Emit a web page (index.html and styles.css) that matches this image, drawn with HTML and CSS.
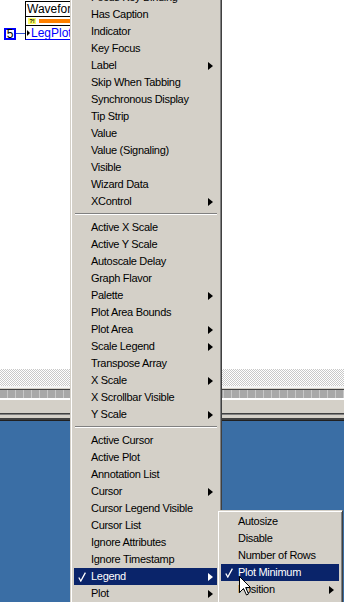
FILE: index.html
```html
<!DOCTYPE html>
<html lang="en">

<head>
    <meta charset="UTF-8">
    <meta name="viewport" content="width=device-width, initial-scale=1.0">
    <link rel="stylesheet" href="styles.css">
    <title>Property Node - Legend</title>
</head>

<body>
    <div class="screen">
        <div class="diagram">
            <div class="node prop-node">
                <div class="prop-title">Waveform Graph</div>
                <div class="prop-error"><span class="warn">?!</span><span class="bar"></span></div>
                <div class="prop-row"><span class="tri"></span>LegPlotMin</div>
            </div>
            <div class="node const">5</div>
            <div class="node wire"></div>
        </div>
        <div class="checker"></div>
        <div class="frame-top"></div>
        <div class="ruler"></div>
        <div class="panel"></div>
        <div class="rail"></div>
        <div class="desktop"></div>
    </div>

    <ul class="menu main-menu">
        <li class="item"><span class="mark"></span><span class="label">Focus Key Binding</span></li>
        <li class="item"><span class="mark"></span><span class="label">Has Caption</span></li>
        <li class="item"><span class="mark"></span><span class="label">Indicator</span></li>
        <li class="item"><span class="mark"></span><span class="label">Key Focus</span></li>
        <li class="item sub"><span class="mark"></span><span class="label">Label</span></li>
        <li class="item"><span class="mark"></span><span class="label">Skip When Tabbing</span></li>
        <li class="item"><span class="mark"></span><span class="label">Synchronous Display</span></li>
        <li class="item"><span class="mark"></span><span class="label">Tip Strip</span></li>
        <li class="item"><span class="mark"></span><span class="label">Value</span></li>
        <li class="item"><span class="mark"></span><span class="label">Value (Signaling)</span></li>
        <li class="item"><span class="mark"></span><span class="label">Visible</span></li>
        <li class="item"><span class="mark"></span><span class="label">Wizard Data</span></li>
        <li class="item sub"><span class="mark"></span><span class="label">XControl</span></li>
        <li class="sep"></li>
        <li class="item"><span class="mark"></span><span class="label">Active X Scale</span></li>
        <li class="item"><span class="mark"></span><span class="label">Active Y Scale</span></li>
        <li class="item"><span class="mark"></span><span class="label">Autoscale Delay</span></li>
        <li class="item"><span class="mark"></span><span class="label">Graph Flavor</span></li>
        <li class="item sub"><span class="mark"></span><span class="label">Palette</span></li>
        <li class="item"><span class="mark"></span><span class="label">Plot Area Bounds</span></li>
        <li class="item sub"><span class="mark"></span><span class="label">Plot Area</span></li>
        <li class="item sub"><span class="mark"></span><span class="label">Scale Legend</span></li>
        <li class="item"><span class="mark"></span><span class="label">Transpose Array</span></li>
        <li class="item sub"><span class="mark"></span><span class="label">X Scale</span></li>
        <li class="item"><span class="mark"></span><span class="label">X Scrollbar Visible</span></li>
        <li class="item sub"><span class="mark"></span><span class="label">Y Scale</span></li>
        <li class="sep"></li>
        <li class="item"><span class="mark"></span><span class="label">Active Cursor</span></li>
        <li class="item"><span class="mark"></span><span class="label">Active Plot</span></li>
        <li class="item"><span class="mark"></span><span class="label">Annotation List</span></li>
        <li class="item sub"><span class="mark"></span><span class="label">Cursor</span></li>
        <li class="item"><span class="mark"></span><span class="label">Cursor Legend Visible</span></li>
        <li class="item"><span class="mark"></span><span class="label">Cursor List</span></li>
        <li class="item"><span class="mark"></span><span class="label">Ignore Attributes</span></li>
        <li class="item"><span class="mark"></span><span class="label">Ignore Timestamp</span></li>
        <li class="item sub active">
            <span class="mark"><svg width="8" height="10" viewBox="0 0 8 10"><polyline points="0.8,5.5 2.8,9 7.4,0.6" fill="none" stroke="currentColor" stroke-width="1.3"/></svg></span>
            <span class="label">Legend</span>
        </li>
        <li class="item sub"><span class="mark"></span><span class="label">Plot</span></li>
    </ul>

    <ul class="menu sub-menu">
        <li class="item"><span class="mark"></span><span class="label">Autosize</span></li>
        <li class="item"><span class="mark"></span><span class="label">Disable</span></li>
        <li class="item"><span class="mark"></span><span class="label">Number of Rows</span></li>
        <li class="item active">
            <span class="mark"><svg width="8" height="10" viewBox="0 0 8 10"><polyline points="0.8,5.5 2.8,9 7.4,0.6" fill="none" stroke="currentColor" stroke-width="1.3"/></svg></span>
            <span class="label">Plot Minimum</span>
        </li>
        <li class="item sub"><span class="mark"></span><span class="label">Position</span></li>
        <li class="item"><span class="mark"></span><span class="label">Scrollbar Visible</span></li>
    </ul>

    <svg class="pointer" width="13" height="20" viewBox="0 0 13 20">
        <path d="M0.5 0.5 L0.5 16.5 L4.5 12.5 L7.5 19 L9.5 18 L6.7 11.5 L11.5 11.5 Z" fill="#fff" stroke="#000" stroke-width="1"/>
    </svg>
</body>

</html>
```

FILE: styles.css
```css
* {
    margin: 0;
    padding: 0;
    box-sizing: border-box;
}

body {
    width: 344px;
    height: 602px;
    overflow: hidden;
    position: relative;
    background: #fff;
    font-family: "Liberation Sans", Arial, sans-serif;
    font-size: 11px;
}

.screen {
    display: flex;
    flex-direction: column;
    height: 602px;
}

/*--------block diagram-------*/

.diagram {
    position: relative;
    flex: none;
    height: 369px;
    background: #fff;
}

.node {
    position: absolute;
}

.prop-node {
    left: 25px;
    top: 1px;
    width: 80px;
    border: 1px solid #000;
    border-bottom-color: #0000ff;
    background: #fff;
}

.prop-title {
    height: 15px;
    line-height: 14px;
    font-size: 12px;
    padding-left: 1px;
    white-space: nowrap;
    border-bottom: 1px solid #000;
}

.prop-error {
    display: flex;
    align-items: center;
    gap: 3px;
    height: 9px;
    padding-left: 2px;
    border-bottom: 1px solid #000;
}

.warn {
    width: 8px;
    height: 6px;
    background: #ffff66;
    font-size: 6px;
    line-height: 6px;
    font-weight: 700;
    text-align: center;
    overflow: hidden;
}

.bar {
    flex: 1;
    height: 4px;
    background: #ff8000;
}

.prop-row {
    display: flex;
    align-items: center;
    height: 13px;
    padding-left: 1px;
    font-size: 12px;
    color: #0000ff;
    white-space: nowrap;
}

.tri {
    width: 0;
    height: 0;
    margin-right: 1px;
    border-left: 3px solid #000;
    border-top: 3px solid transparent;
    border-bottom: 3px solid transparent;
}

.const {
    left: 4px;
    top: 28px;
    width: 12px;
    height: 12px;
    border: 2px solid #0000ff;
    background: #fff;
    font-size: 12px;
    line-height: 8px;
    text-align: center;
}

.wire {
    left: 16px;
    top: 33px;
    width: 9px;
    height: 1px;
    background: #3050d0;
}

/*--------window strips-------*/

.checker {
    flex: none;
    height: 17px;
    background: repeating-conic-gradient(#c8c8c8 0 25%, #fff 0 50%) 0 0 / 2px 2px;
}

.frame-top {
    flex: none;
    height: 3px;
    border-top: 2px solid #f4f4f4;
    border-bottom: 1px solid #d4d0c8;
}

.ruler {
    flex: none;
    height: 9px;
    border-top: 1px solid #404040;
    background: repeating-linear-gradient(90deg, #a8a8a8 0 7px, #c8c8c8 7px 8px);
}

.panel {
    flex: none;
    height: 15px;
    border-top: 2px solid #fff;
    background: #d4d0c8;
}

.rail {
    flex: none;
    height: 8px;
    background: linear-gradient(#404040 0 1px, #808080 1px 2px, #d4d0c8 2px 5px, #404040 5px 7px, #202020 7px 8px);
}

.desktop {
    flex: 1;
    background: #3a6ea5;
}

/*--------menus-------*/

.menu {
    position: absolute;
    list-style: none;
    background: #d4d0c8;
    padding: 2px 3px;
    border: 1px solid;
    border-color: #d4d0c8 #404040 #404040 #d4d0c8;
    box-shadow: inset 1px 1px #fff, inset -1px -1px #808080;
    color: #000;
}

.main-menu {
    left: 70px;
    top: -14px;
    width: 152px;
}

.sub-menu {
    left: 217px;
    top: 510px;
    width: 126px;
}

.item {
    display: flex;
    align-items: center;
    height: 17px;
    padding-right: 5px;
    white-space: nowrap;
}

.mark {
    flex: none;
    display: flex;
    align-items: center;
    width: 17px;
    height: 17px;
    padding-left: 4px;
}

.label {
    flex: 1;
    line-height: 17px;
    letter-spacing: -0.3px;
}

.item.sub::after {
    content: "";
    width: 0;
    height: 0;
    border-left: 5px solid currentColor;
    border-top: 4px solid transparent;
    border-bottom: 4px solid transparent;
}

.item.active {
    background: #0a246a;
    color: #fff;
}

.sep {
    height: 0;
    margin: 3px 1px 4px;
    border-top: 1px solid #808080;
    border-bottom: 1px solid #fff;
}

.pointer {
    position: absolute;
    left: 239px;
    top: 576px;
}
```
